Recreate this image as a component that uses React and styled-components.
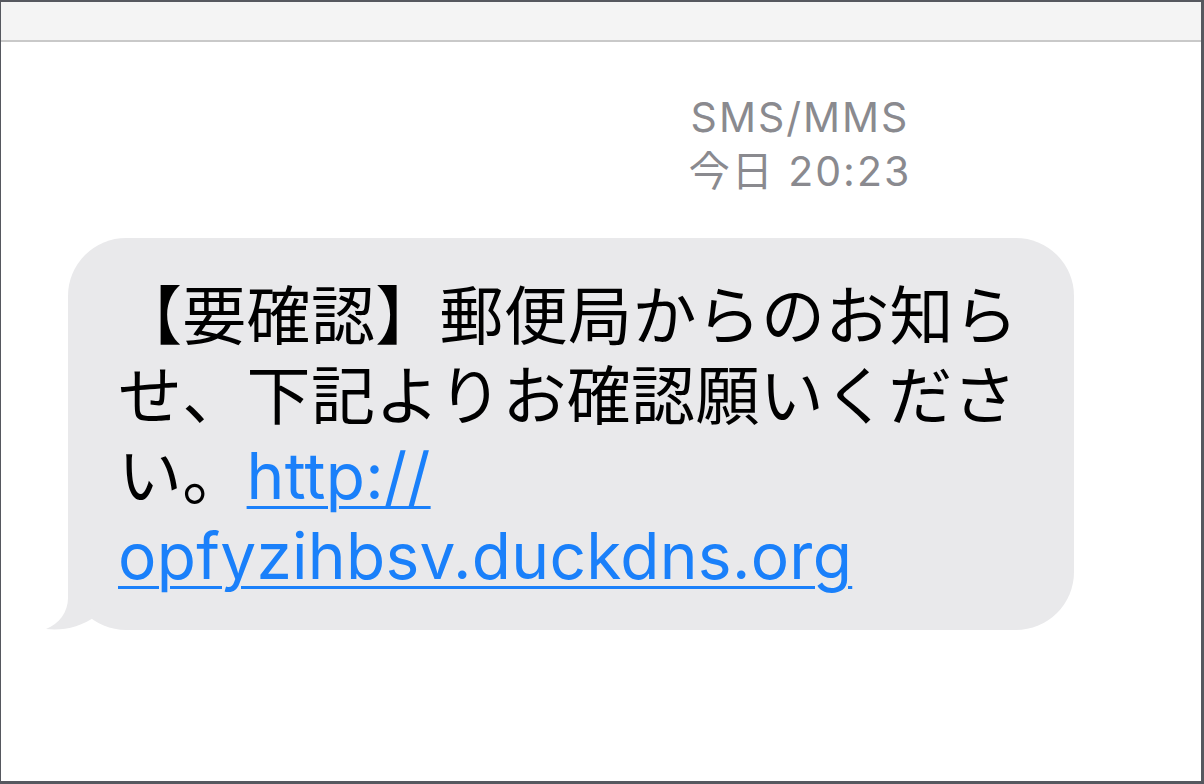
import React from 'react';
import styled, { createGlobalStyle } from 'styled-components';

const GlobalStyle = createGlobalStyle`
  html, body {
    margin: 0;
    padding: 0;
    background: #ffffff;
  }
  * {
    box-sizing: border-box;
  }
`;

const Frame = styled.div`
  width: 1204px;
  height: 784px;
  border-style: solid;
  border-color: #56585f;
  border-width: 2px 3px 3px 1px;
  background: #ffffff;
  display: flex;
  flex-direction: column;
  overflow: hidden;
`;

const TopBar = styled.div`
  height: 40px;
  flex-shrink: 0;
  background: #f4f4f4;
  border-bottom: 2px solid #c9c9c9;
`;

const Thread = styled.main`
  flex: 1;
  display: flex;
  flex-direction: column;
  padding: 48px 0 0 44px;
`;

const Meta = styled.header`
  align-self: flex-start;
  margin-left: 626px;
  display: flex;
  flex-direction: column;
  align-items: center;
  width: 258px;
  font-family: Inter, 'Noto Sans CJK JP', sans-serif;
  font-size: 41px;
  line-height: 54px;
  letter-spacing: 2px;
  color: #8a8a8f;
`;

const Bubble = styled.div`
  position: relative;
  margin-top: 40px;
  margin-left: 23px;
  width: 1006px;
  padding: 38px 40px 34px 50px;
  background: #e9e9eb;
  border-radius: 58px;
  font-family: Inter, 'Noto Sans CJK JP', sans-serif;
  font-size: 64px;
  line-height: 80px;
  letter-spacing: 0.3px;
  color: #000000;
`;

const Tail = styled.svg`
  position: absolute;
  left: -23px;
  bottom: 0;
  width: 80px;
  height: 70px;
  fill: #e9e9eb;
`;

const Link = styled.a`
  color: #1a80fa;
  text-decoration: underline;
  text-decoration-thickness: 3px;
  text-underline-offset: 7px;
`;

const App = () => {
  return (
    <>
      <GlobalStyle />
      <Frame>
        <TopBar />
        <Thread>
          <Meta>
            <span>SMS/MMS</span>
            <span>今日 20:23</span>
          </Meta>
          <Bubble>
            【要確認】郵便局からのお知ら
            <br />
            せ、下記よりお確認願いくださ
            <br />
            い。<Link href="#">http://</Link>
            <br />
            <Link href="#">opfyzihbsv.duckdns.org</Link>
            <Tail viewBox="0 0 80 70">
              <path d="M23 5 L23 38 C23 52 14 64 1 69 C18 71 36 67 51 56 C40 44 28 25 23 5 Z" />
            </Tail>
          </Bubble>
        </Thread>
      </Frame>
    </>
  );
};

export default App;
